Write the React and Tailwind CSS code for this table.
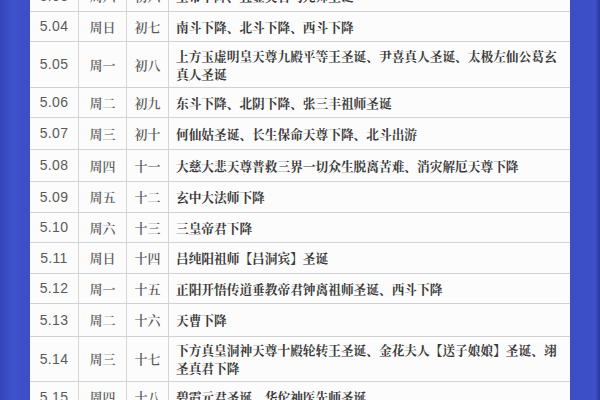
import React from "react";

const cjk = "font-['Noto_Serif_CJK_SC','Noto_Sans_CJK_SC',serif]";

const rows = [
  { date: "5.03", week: "周六", lunar: "初六", text: "玉帝下降、五显灵官马元帅圣诞", h: "h-[31px]" },
  { date: "5.04", week: "周日", lunar: "初七", text: "南斗下降、北斗下降、西斗下降", h: "h-[30px]" },
  {
    date: "5.05",
    week: "周一",
    lunar: "初八",
    text: "上方玉虚明皇天尊九殿平等王圣诞、尹喜真人圣诞、太极左仙公葛玄真人圣诞",
    h: "h-[46px]",
  },
  { date: "5.06", week: "周二", lunar: "初九", text: "东斗下降、北阴下降、张三丰祖师圣诞", h: "h-[30px]" },
  { date: "5.07", week: "周三", lunar: "初十", text: "何仙姑圣诞、长生保命天尊下降、北斗出游", h: "h-[32px]" },
  {
    date: "5.08",
    week: "周四",
    lunar: "十一",
    text: "大慈大悲天尊普救三界一切众生脱离苦难、消灾解厄天尊下降",
    h: "h-[32px]",
  },
  { date: "5.09", week: "周五", lunar: "十二", text: "玄中大法师下降", h: "h-[31px]" },
  { date: "5.10", week: "周六", lunar: "十三", text: "三皇帝君下降", h: "h-[30px]" },
  { date: "5.11", week: "周日", lunar: "十四", text: "吕纯阳祖师【吕洞宾】圣诞", h: "h-[31px]" },
  { date: "5.12", week: "周一", lunar: "十五", text: "正阳开悟传道垂教帝君钟离祖师圣诞、西斗下降", h: "h-[30px]" },
  { date: "5.13", week: "周二", lunar: "十六", text: "天曹下降", h: "h-[33px]" },
  {
    date: "5.14",
    week: "周三",
    lunar: "十七",
    text: "下方真皇洞神天尊十殿轮转王圣诞、金花夫人【送子娘娘】圣诞、翊圣真君下降",
    h: "h-[45px]",
  },
  { date: "5.15", week: "周四", lunar: "十八", text: "碧霞元君圣诞、华佗神医先师圣诞", h: "h-[31px]" },
];

function Row({ row }) {
  return (
    <div className={`flex ${row.h} border-b border-[#d2d2d2]`}>
      <div className="w-[49px] shrink-0 flex items-center justify-center border-r border-[#d6d6d6] font-['Liberation_Sans',sans-serif] text-[14px] tracking-[0.3px] text-[#5a5a5a]">
        {row.date}
      </div>
      <div className={`w-[48px] shrink-0 flex items-center justify-center border-r border-[#d6d6d6] ${cjk} font-semibold text-[13px] text-[#606060]`}>
        {row.week}
      </div>
      <div className={`w-[42px] shrink-0 flex items-center justify-center border-r border-[#d6d6d6] ${cjk} font-semibold text-[13px] text-[#5a5a5a]`}>
        {row.lunar}
      </div>
      <div className={`flex-1 flex items-center pl-[7px] pr-[10px] ${cjk} font-bold text-[12.7px] leading-[18px] text-[#3a3a3a]`}>
        <p>{row.text}</p>
      </div>
    </div>
  );
}

export default function App() {
  return (
    <div className="w-[600px] h-[400px] overflow-hidden flex bg-[#3d4fc6]">
      <div className="w-[30px] shrink-0 bg-[linear-gradient(90deg,#3344b8,#3e52cb_40%,#3b4ec6)]" />
      <div className="w-[540px] shrink-0 bg-[#fcfcfc] overflow-hidden">
        <div className="-mt-[19px]">
          {rows.map((row) => (
            <Row key={row.date} row={row} />
          ))}
        </div>
      </div>
      <div className="flex-1 bg-[linear-gradient(90deg,#3b4ec6,#3d50c8_85%,#2a3796)]" />
    </div>
  );
}
